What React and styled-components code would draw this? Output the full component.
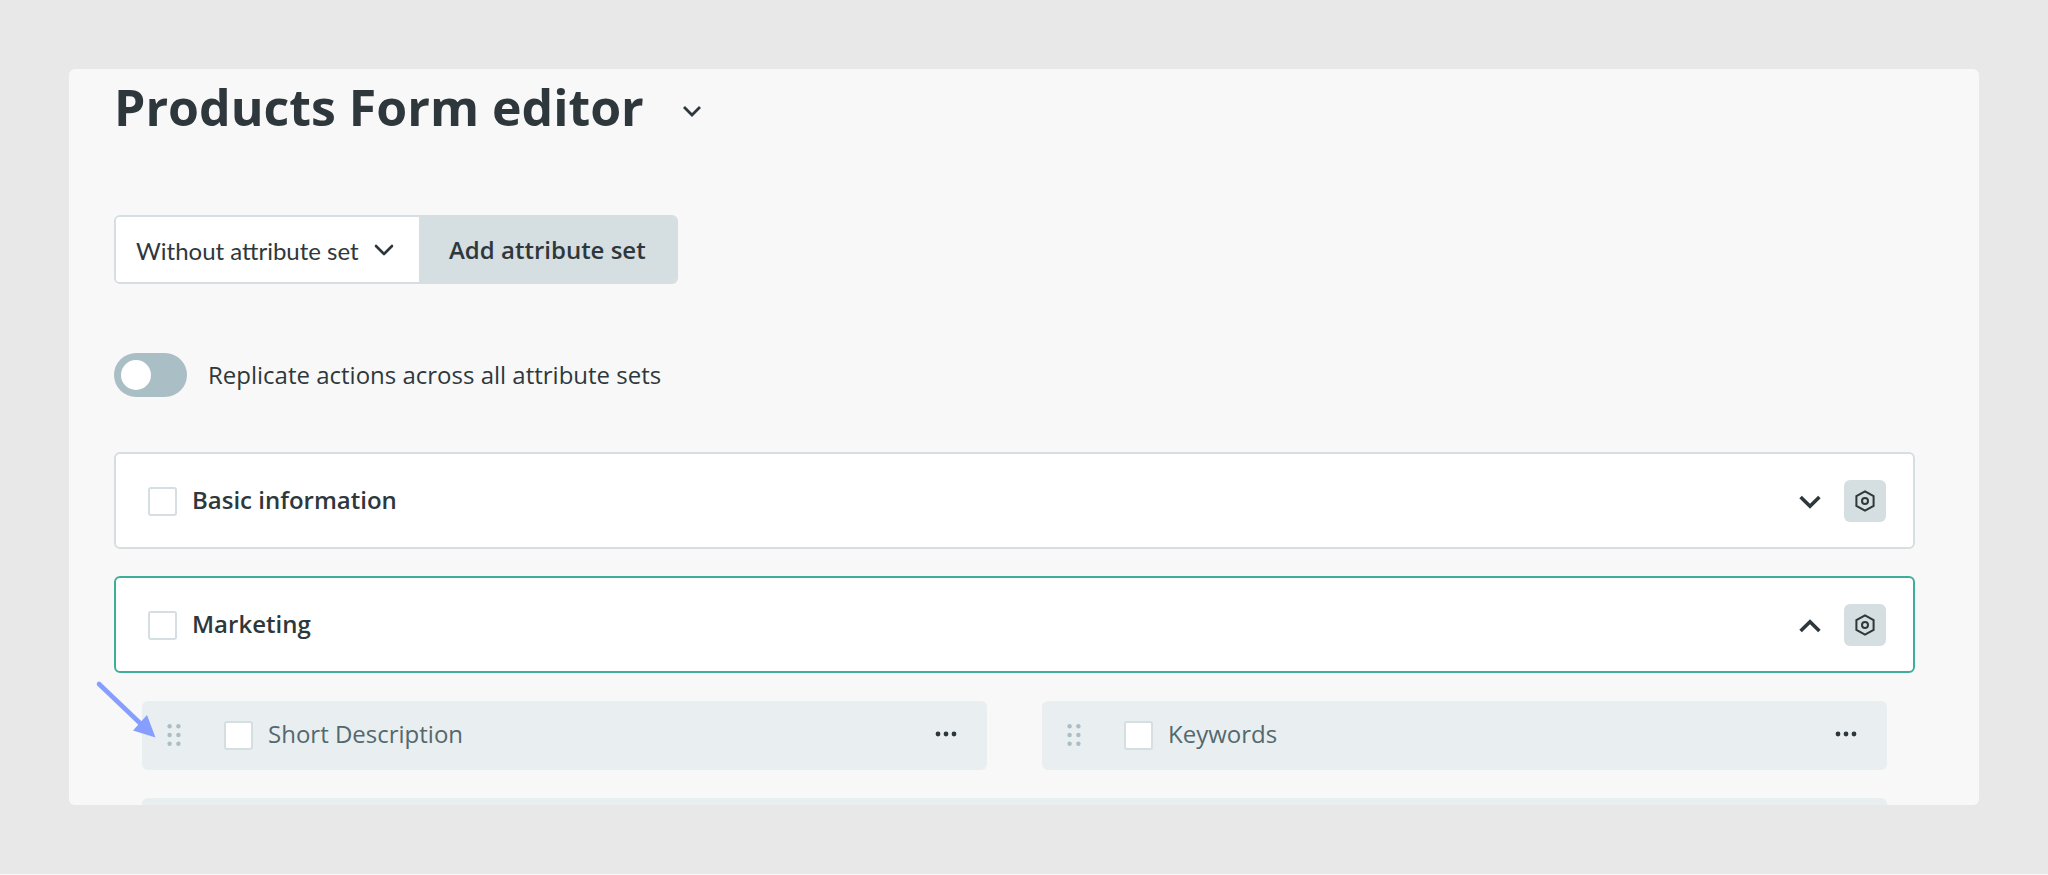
import React from 'react'
import styled, { createGlobalStyle } from 'styled-components'

const GlobalStyle = createGlobalStyle`
    * {
        box-sizing: border-box;
    }

    body {
        margin: 0;
        background-color: #e8e8e8;
        color: #2e383c;
        font-family: "Open Sans", "Noto Sans", sans-serif;
        font-size: 24px;
        line-height: 32px;
    }
`

const Page = styled.div`
    display: flex;
    height: 100vh;
    padding: 69px;
    border-bottom: 1px solid #f8f8f8;
`

const Panel = styled.main`
    flex: 1;
    min-width: 0;
    padding: 4px 64px 0 45px;
    overflow: hidden;
    background-color: #f8f8f8;
    border-radius: 6px;
`

const Header = styled.header`
    display: flex;
    align-items: center;
    gap: 28px;
    margin-bottom: 74px;
`

const Title = styled.h1`
    margin: 0;
    font-size: 50px;
    font-weight: 700;
    line-height: 68px;
`

const IconButton = styled.button`
    display: flex;
    align-items: center;
    justify-content: center;
    padding: 0;
    border: none;
    background: none;
    color: inherit;
    cursor: pointer;

    svg {
        display: block;
    }
`

const TitleButton = styled(IconButton)`
    width: 40px;
    height: 40px;
    margin-top: 8px;
`

const AttributeBar = styled.div`
    display: flex;
    width: fit-content;
    height: 69px;
    margin-bottom: 69px;
    border: 2px solid #d5dee1;
    border-radius: 6px;
    overflow: hidden;
`

const SelectBox = styled.div`
    display: grid;
    align-items: center;
    background-color: #fff;

    > * {
        grid-area: 1 / 1;
    }

    svg {
        justify-self: end;
        margin-right: 24px;
        pointer-events: none;
    }
`

const Select = styled.select`
    appearance: none;
    height: 100%;
    padding: 2px 60px 0 20px;
    border: none;
    background: none;
    color: inherit;
    font-family: Lato, sans-serif;
    font-size: 24px;
    cursor: pointer;
`

const AddButton = styled.button`
    padding: 0 30px;
    border: none;
    background-color: #d5dee1;
    color: inherit;
    font-family: inherit;
    font-size: 24px;
    font-weight: 600;
    cursor: pointer;
`

const ToggleLabel = styled.label`
    display: flex;
    align-items: center;
    gap: 21px;
    width: fit-content;
    margin-bottom: 55px;
    cursor: pointer;
`

const Toggle = styled.input`
    appearance: none;
    width: 73px;
    height: 44px;
    margin: 0;
    padding: 7px;
    border-radius: 22px;
    background-color: #aabfc5;
    cursor: pointer;

    &::before {
        content: "";
        display: block;
        width: 30px;
        height: 30px;
        border-radius: 50%;
        background-color: #fff;
    }

    &:checked {
        background-color: #3eae98;
    }

    &:checked::before {
        margin-left: auto;
    }
`

const Section = styled.section`
    display: flex;
    align-items: center;
    height: 97px;
    margin-bottom: 27px;
    padding: 0 27px 0 32px;
    background-color: #fff;
    border: 2px solid ${(props) => (props.$open ? '#3eae98' : '#d5dee1')};
    border-radius: 6px;
`

const CheckLabel = styled.label`
    display: flex;
    align-items: center;
    gap: 15px;
    margin-right: auto;
    padding-bottom: 2px;
    font-weight: ${(props) => (props.$bold ? 600 : 400)};
    cursor: pointer;
`

const Checkbox = styled.input`
    appearance: none;
    width: 29px;
    height: 29px;
    margin: 3px 0 0;
    border: 2px solid #d5dee1;
    border-radius: 3px;
    background-color: #fff;
    cursor: pointer;

    &:checked {
        background-color: #3eae98;
    }
`

const SettingsButton = styled(IconButton)`
    width: 42px;
    height: 42px;
    margin-left: 22px;
    border-radius: 6px;
    background-color: #d5dee1;
`

const Fields = styled.div`
    display: grid;
    grid-template-columns: 1fr 1fr;
    gap: 28px 55px;
    padding: 1px 28px 0;
`

const Field = styled.div`
    position: relative;
    display: flex;
    align-items: center;
    height: 69px;
    grid-column: ${(props) => (props.$wide ? '1 / -1' : 'auto')};
    padding: 0 25px 2px 20px;
    background-color: #e9eef1;
    border-radius: 6px;
    color: #53696d;
`

const DragHandle = styled(IconButton)`
    width: 24px;
    height: 32px;
    margin-right: 38px;
    color: #aabfc5;
    cursor: grab;
`

const MoreButton = styled(IconButton)`
    width: 32px;
    height: 32px;
    margin-bottom: 2px;
    color: #2e383c;
`

const Arrow = styled.svg`
    position: absolute;
    top: -22px;
    left: -48px;
    pointer-events: none;
`

function SmallChevron({ round }) {
    return (
        <svg width="22" height="16" viewBox="0 0 22 16" fill="none" stroke="currentColor" strokeWidth={round ? 2.6 : 2.8} strokeLinecap={round ? 'round' : 'butt'} strokeLinejoin={round ? 'round' : 'miter'} aria-hidden="true">
            <path d="M3 4L11 12L19 4" />
        </svg>
    )
}

function SectionChevron({ up }) {
    return (
        <svg width="24" height="18" viewBox="0 0 24 18" fill="none" stroke="currentColor" strokeWidth="3.6" aria-hidden="true">
            <path d={up ? 'M2.6 15L12 5.8L21.4 15' : 'M2.6 5L12 14.2L21.4 5'} />
        </svg>
    )
}

function NutIcon() {
    return (
        <svg width="24" height="24" viewBox="0 0 24 24" fill="none" stroke="currentColor" strokeWidth="2" aria-hidden="true">
            <path d="M12 2.3L20.6 7.1V16.9L12 21.7L3.4 16.9V7.1Z" />
            <circle cx="12" cy="12" r="3" />
        </svg>
    )
}

function GripIcon() {
    return (
        <svg width="16" height="24" viewBox="0 0 16 24" fill="currentColor" aria-hidden="true">
            {[3.3, 12, 20.7].map((y) => (
                <React.Fragment key={y}>
                    <circle cx="3.6" cy={y} r="2.2" />
                    <circle cx="12.4" cy={y} r="2.2" />
                </React.Fragment>
            ))}
        </svg>
    )
}

function MoreIcon() {
    return (
        <svg width="24" height="8" viewBox="0 0 24 8" fill="currentColor" aria-hidden="true">
            <circle cx="4" cy="4" r="2.4" />
            <circle cx="12" cy="4" r="2.4" />
            <circle cx="20" cy="4" r="2.4" />
        </svg>
    )
}

function FormSection({ name, open }) {
    return (
        <Section $open={open}>
            <CheckLabel $bold>
                <Checkbox type="checkbox" />
                {name}
            </CheckLabel>
            <IconButton aria-label={`Toggle ${name}`} aria-expanded={!!open}>
                <SectionChevron up={open} />
            </IconButton>
            <SettingsButton aria-label={`${name} settings`}>
                <NutIcon />
            </SettingsButton>
        </Section>
    )
}

function FormField({ name, children }) {
    return (
        <Field>
            <DragHandle aria-label={`Move ${name}`}>
                <GripIcon />
            </DragHandle>
            <CheckLabel>
                <Checkbox type="checkbox" />
                {name}
            </CheckLabel>
            <MoreButton aria-label={`${name} actions`}>
                <MoreIcon />
            </MoreButton>
            {children}
        </Field>
    )
}

export default function App() {
    return (
        <>
            <GlobalStyle />
            <Page>
                <Panel>
                    <Header>
                        <Title>Products Form editor</Title>
                        <TitleButton aria-label="Change form">
                            <SmallChevron />
                        </TitleButton>
                    </Header>
                    <AttributeBar>
                        <SelectBox>
                            <Select aria-label="Attribute set">
                                <option>Without attribute set</option>
                            </Select>
                            <SmallChevron round />
                        </SelectBox>
                        <AddButton>Add attribute set</AddButton>
                    </AttributeBar>
                    <ToggleLabel>
                        <Toggle type="checkbox" role="switch" />
                        Replicate actions across all attribute sets
                    </ToggleLabel>
                    <FormSection name="Basic information" />
                    <FormSection name="Marketing" open />
                    <Fields>
                        <FormField name="Short Description">
                            <Arrow width="64" height="64" viewBox="0 0 64 64" fill="none" aria-hidden="true">
                                <path d="M5 5L48 46" stroke="#869fff" strokeWidth="4.6" strokeLinecap="round" />
                                <path d="M61.5 58.5L53 36L39 51.5Z" fill="#869fff" />
                            </Arrow>
                        </FormField>
                        <FormField name="Keywords" />
                        <Field $wide />
                    </Fields>
                </Panel>
            </Page>
        </>
    )
}
